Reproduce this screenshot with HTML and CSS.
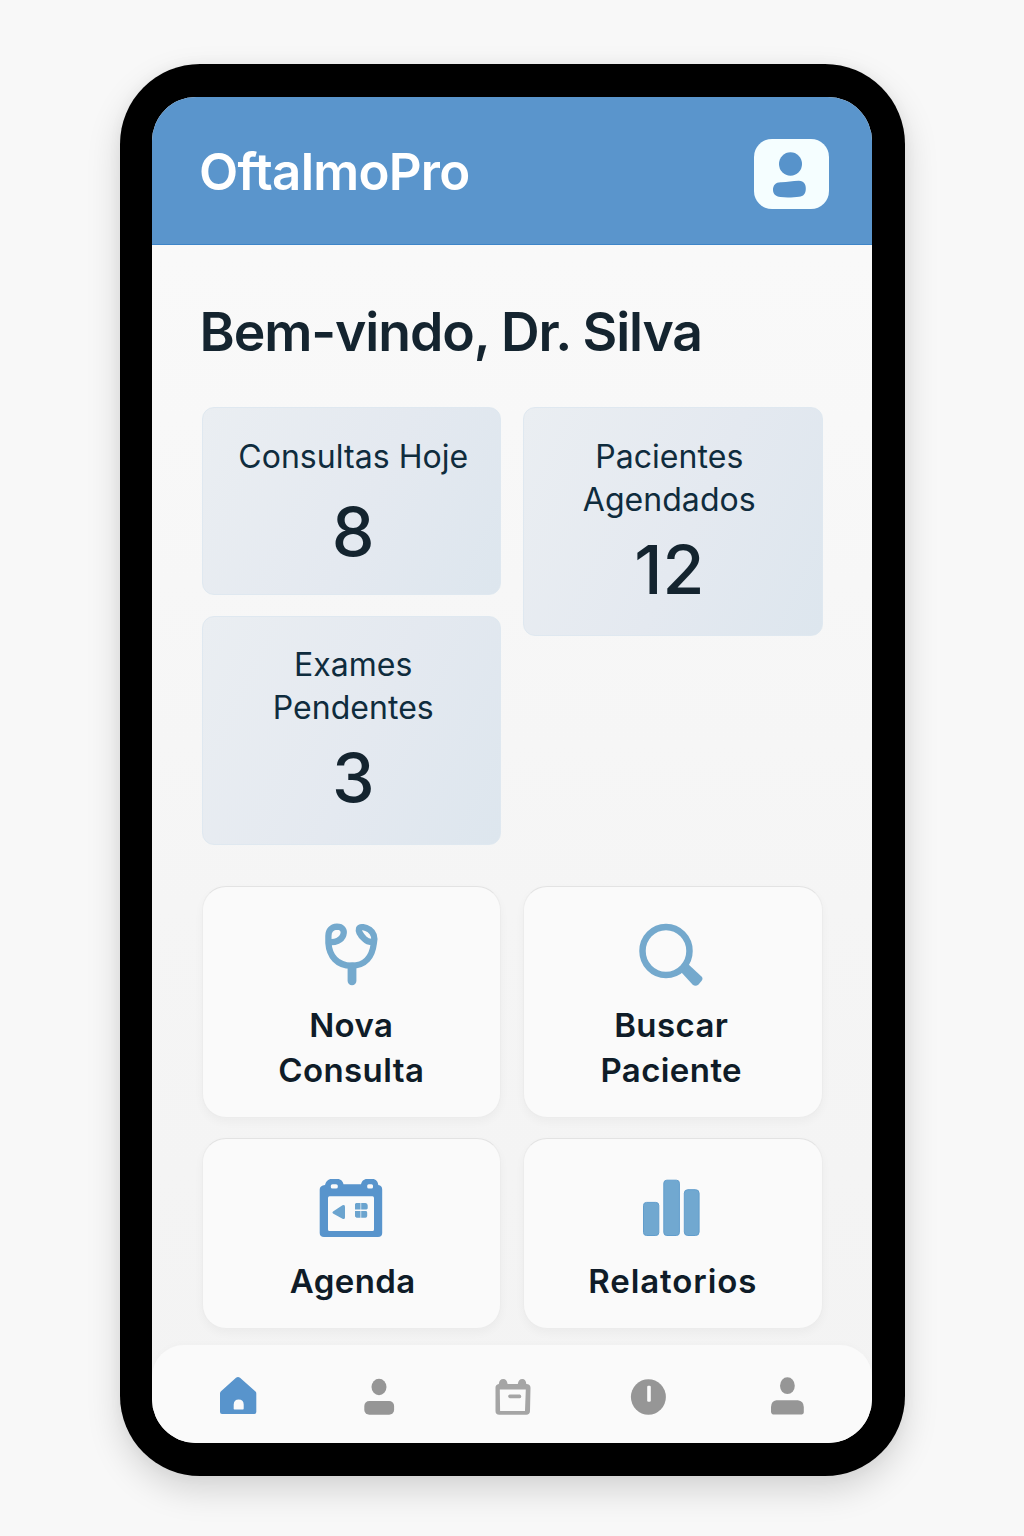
FILE: index.html
```html
<!DOCTYPE html>
<html lang="pt-BR">
<head>
<meta charset="utf-8">
<title>OftalmoPro</title>
<link rel="stylesheet" href="styles.css">
</head>
<body>
<main class="phone">
  <div class="screen">
    <header class="header">
      <h1 class="brand">OftalmoPro</h1>
      <div class="avatar">
        <svg viewBox="14 19 75 70" width="75" height="70">
          <ellipse cx="50.5" cy="44" rx="11.5" ry="11.8"/>
          <path d="M41 62.2C47 62.3 53 60.700 59 60.800C64 61 66 64.500 65.800 69C65.600 74 63.500 76.200 59 76.800C54 77.500 46 77.800 40.500 77.100C35.500 76.500 33 74 33 69.800C33 65.500 35.500 62.100 41 62.200Z"/>
        </svg>
      </div>
    </header>
    <section class="content">
      <h2 class="welcome">Bem-vindo, Dr. Silva</h2>
      <div class="stats">
        <div class="stats-col stats-col-left">
          <article class="stat stat-single">
            <p class="stat-label">Consultas Hoje</p>
            <p class="stat-value">8</p>
          </article>
          <article class="stat stat-pending">
            <p class="stat-label">Exames<br>Pendentes</p>
            <p class="stat-value">3</p>
          </article>
        </div>
        <div class="stats-col stats-col-right">
          <article class="stat">
            <p class="stat-label">Pacientes<br>Agendados</p>
            <p class="stat-value">12</p>
          </article>
        </div>
      </div>
      <div class="actions">
        <a class="action">
          <svg class="action-icon" viewBox="8 12 66 66">
            <g fill="none" stroke="#74a9cd" stroke-width="6.300" stroke-linecap="round" stroke-linejoin="round">
              <path d="M19 32C25 32.800 31.500 30.500 33.300 25C35 20 32 16.700 27 16.700C21.500 17 18.400 20.500 18.400 26V33C19.300 46 27 55.700 41.500 55.700C55.500 55.700 62.300 46.500 63.800 33.500C65.200 27.500 64 22.800 59.500 19.600C55.500 17 50 16 49 18.600C48.200 21.200 51 25.800 54.500 29C57.500 31.800 61 32.500 63.800 31.500"/>
              <path d="M42 57V70.800" stroke-width="8.800"/>
            </g>
          </svg>
          <span class="action-label">Nova<br>Consulta</span>
        </a>
        <a class="action action-search">
          <svg class="action-icon" viewBox="15 12 66 66">
            <ellipse cx="41" cy="41" rx="23.500" ry="24" fill="none" stroke="#74a9cd" stroke-width="6.500"/>
            <path d="M62.500 53.500L76.500 66.500Q78.500 68.500 76.500 71L73.500 74.500Q70.500 77 67.500 74.500L56.500 62.500Z" fill="#74a9cd"/>
          </svg>
          <span class="action-label">Buscar<br>Paciente</span>
        </a>
        <a class="action action-agenda">
          <svg class="action-icon" viewBox="13 9 66 66">
            <path fill="#5894cc" fill-rule="evenodd" d="M20 20C21 16.500 23 14 26.500 14H32.500C36 14 38 16.500 38.500 19.300H56C56.800 16.300 58.500 14 62 14H67.500C71 14 72.800 16.500 73.300 20C76 20.500 77.200 22 77.200 24.500V68C77.200 70.700 75.700 72 73 72H19C16.300 72 14.700 70.500 14.700 68V24.500C14.700 22 16.500 20.300 20 20ZM27.500 19.200Q25.800 19.200 25.800 20.800V22Q25.800 23.500 27.500 23.500H31Q32.800 23.500 32.800 22V20.800Q32.800 19.200 31 19.200ZM63.800 19.200Q62.200 19.200 62.200 20.800V22Q62.200 23.500 63.800 23.500H66.500Q68 23.500 68 22V20.800Q68 19.200 66.500 19.200ZM24.500 31.300Q23 31.300 23 33V64.500Q23 66 24.500 66H67.500Q69 66 69 64.500V33Q69 31.300 67.500 31.300Z"/>
            <path fill="#6ba4cf" d="M28 46.500L37.500 40.200Q40.200 39.200 40 42V52.500Q39.800 54.800 37.500 53.800L28 48.500Q26.800 47.500 28 46.500ZM51 38H55.500V44.500H50V39ZM56.200 38H60.500Q62.700 38.200 62.700 40.500V43.500L61.500 44.500H56.200ZM50 46H55.500V52.800H51.500L50 51.500ZM56.200 46H61.500L62.200 47.500V51Q62 52.800 60.500 52.800H56.200Z"/>
          </svg>
          <span class="action-label">Agenda</span>
        </a>
        <a class="action action-reports">
          <svg class="action-icon" viewBox="10 9 66 66">
            <g fill="#71a8d0" stroke="#619dcc" stroke-width="1">
              <rect x="13.500" y="37.400" width="15.300" height="33.100" rx="3"/>
              <rect x="33.800" y="15.200" width="15.600" height="55.300" rx="3"/>
              <rect x="54.300" y="24.700" width="14.800" height="45.800" rx="3.500"/>
            </g>
          </svg>
          <span class="action-label">Relatorios</span>
        </a>
      </div>
    </section>
    <nav class="tabs">
      <svg class="tab tab-active" viewBox="18 15 40 42">
        <path fill-rule="evenodd" d="M36 17.700Q38 16.300 40 17.700L55.500 31.500Q56.300 32.200 56.300 33.500V52Q56.300 54 54.300 54H22Q20 54 20 52V33.500Q20 32.200 21 31.300ZM33.700 48.500Q33.500 49.500 34.500 49.500H43Q43.700 49.500 43.700 48.500V44.500Q43.500 39.500 38.700 39.500Q34 39.500 33.700 44.500Z"/>
      </svg>
      <svg class="tab" viewBox="155 15 40 42">
        <ellipse cx="179" cy="27" rx="7.500" ry="8.200"/>
        <rect x="164.300" y="41" width="29.800" height="13.800" rx="5"/>
      </svg>
      <svg class="tab tab-light" viewBox="13.200 15 40 42">
        <path fill-rule="evenodd" d="M19 24Q19.500 19 23.500 19Q27 19 27.800 24H38Q38.800 19 42.500 19Q46 19 46.500 24Q50.800 24 50.700 28L50.200 51Q50 54.800 46.500 54.800H19.500Q15.700 54.800 15.700 51V28Q15.600 24.500 19 24ZM20 29.500L20.300 51H45.200L46 29.500ZM30 34.500H40Q41.500 34.800 41.500 36.500Q41.500 38 40 38.200H30Q28.500 38 28.300 36.300Q28.500 34.700 30 34.500Z"/>
      </svg>
      <svg class="tab" viewBox="150.100 15 40 42">
        <ellipse cx="168.500" cy="37" rx="17.500" ry="17.800"/>
        <rect x="167.300" y="25.700" width="3.600" height="16" rx="1.200" fill="#fafafa"/>
      </svg>
      <svg class="tab" viewBox="287.200 15 40 42">
        <ellipse cx="307.600" cy="25.700" rx="7.400" ry="8.400"/>
        <path d="M296.500 40.300H318Q323.800 41 324 47V52Q324 54.600 320.500 54.600H294.500Q291.200 54.600 291.200 51.500V47Q291.500 41 296.500 40.300Z"/>
      </svg>
    </nav>
  </div>
</main>
</body>
</html>
```
FILE: styles.css
```css
* {
  box-sizing: border-box;
}

body {
  margin: 0;
  height: 1536px;
  padding: 64px 119px 60px 120px;
  overflow: hidden;
  background: #f8f8f8;
  color: #14242f;
  font-family: Inter, "Liberation Sans", sans-serif;
}

h1, h2, p {
  margin: 0;
}

.phone {
  height: 1412px;
  padding: 33px 33px 33px 32px;
  border-radius: 80px;
  background: #000;
  box-shadow: 0 14px 34px rgba(0, 0, 0, .15), 0 0 14px rgba(0, 0, 0, .04);
}

.screen {
  display: flex;
  flex-direction: column;
  height: 1346px;
  border-radius: 44px;
  overflow: hidden;
  background: linear-gradient(#fafafa, #f5f5f5 60%, #f3f3f3);
}

.header {
  display: flex;
  justify-content: space-between;
  align-items: flex-start;
  height: 148px;
  padding: 42px 43px 0 47px;
  border-bottom: 1px solid #3e85c8;
  background: #5a95cc;
}

.brand {
  margin-top: 1px;
  color: #fff;
  font-size: 51px;
  font-weight: 600;
  letter-spacing: -.75px;
  line-height: 64px;
}

.avatar {
  width: 75px;
  height: 70px;
  border-radius: 18px;
  background: #f5feff;
}

.avatar svg {
  display: block;
  fill: #5793cb;
}

.content {
  flex: 1;
  padding: 0 49.5px 0 49.5px;
}

.welcome {
  margin: 55px 0 43px -2px;
  font-size: 53.5px;
  font-weight: 600;
  letter-spacing: -1.1px;
  line-height: 64px;
  white-space: nowrap;
}

.stats {
  display: flex;
  align-items: flex-start;
  gap: 22px;
}

.stats-col {
  display: flex;
  flex: 1;
  flex-direction: column;
  gap: 21px;
}

.stat {
  height: 229px;
  padding-top: 28px;
  border: 1px solid #dfe8f0;
  border-radius: 12px;
  background: linear-gradient(115deg, #eaeef2, #e4e9f0 55%, #dde6ee);
  text-align: center;
}

.stats-col-left .stat {
  padding-left: 4px;
}

.stats-col-right .stat {
  padding-right: 7px;
}

.stat-single {
  height: 188px;
}

.stat-pending {
  padding-top: 27px;
}

.stat-label {
  color: #0f2c3d;
  font-size: 32px;
  letter-spacing: .05px;
  line-height: 42.5px;
  white-space: nowrap;
}

.stat-value {
  margin-top: 12px;
  font-size: 68px;
  font-weight: 500;
  line-height: 72px;
}

.stat-single .stat-value {
  margin-top: 16px;
}

.actions {
  display: grid;
  grid-template-columns: 1fr 1fr;
  grid-template-rows: 232px 191px;
  gap: 20px 22px;
  margin-top: 41px;
}

.action {
  display: flex;
  flex-direction: column;
  align-items: center;
  padding-top: 35px;
  border: 1px solid #ececec;
  border-top-color: #e3e3e3;
  border-radius: 24px;
  background: #fafafa;
  box-shadow: 0 4px 10px rgba(0, 0, 0, .035);
}

.action-icon {
  width: 66px;
  height: 66px;
  overflow: visible;
}

.action-label {
  margin-top: 15px;
  color: #0f1c28;
  font-size: 33px;
  font-weight: 600;
  letter-spacing: .4px;
  line-height: 44.5px;
  text-align: center;
}

.action-search .action-label {
  margin-right: 3px;
}

.action-agenda .action-label {
  margin: 19px 0 0 3px;
}

.action-reports .action-label {
  margin-top: 19px;
  letter-spacing: .9px;
}

.tabs {
  display: flex;
  justify-content: space-between;
  height: 98px;
  padding: 30px 65px 0 66px;
  border-radius: 32px 32px 0 0;
  background: #fafafa;
  box-shadow: 0 -2px 6px rgba(0, 0, 0, .015);
}

.tab {
  width: 40px;
  height: 42px;
  overflow: visible;
  fill: #969696;
}

.tab-active {
  fill: #5894cc;
}

.tab-light {
  fill: #a5a5a5;
}
```
